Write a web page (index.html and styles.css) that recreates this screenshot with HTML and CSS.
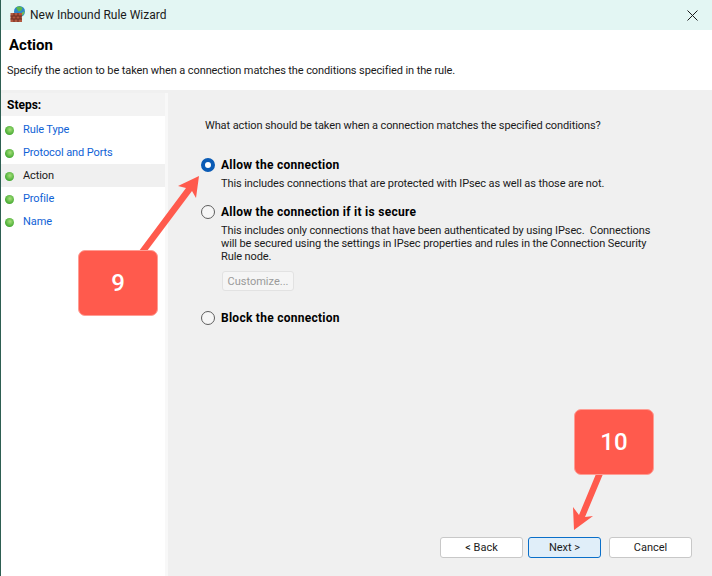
FILE: index.html
```html
<!DOCTYPE html>
<html lang="en">
<head>
<meta charset="utf-8">
<title>New Inbound Rule Wizard</title>
<link rel="stylesheet" href="styles.css">
</head>
<body>
<div class="window">
  <header class="titlebar">
    <svg class="app-icon" width="18" height="18" viewBox="0 0 18 18">
      <circle cx="9.500" cy="5.500" r="5.500" fill="#2f86c9"/>
      <path d="M6 1.500c2-1.500 5-1.500 6.500 0.500l-1 2.500-3 1z" fill="#5fb84a"/>
      <path d="M11.500 7l3-2c0 2-1 4-3 5z" fill="#6fc052"/>
      <rect x="0.500" y="7" width="11.500" height="9" fill="#b2573f"/>
      <path d="M0.500 10h11.500M0.500 13h11.500M4 7v3M8 7v3M2 10v3M6 10v3M10 10v3M4 13v3M8 13v3" stroke="#6d2f22" stroke-width="1" fill="none"/>
    </svg>
    <span class="title">New Inbound Rule Wizard</span>
    <svg class="close" width="11" height="11" viewBox="0 0 11 11">
      <path d="M0.500 0.500l10 10M10.500 0.500l-10 10" stroke="#1a1a1a" stroke-width="1" fill="none"/>
    </svg>
  </header>
  <section class="head">
    <h1>Action</h1>
    <p>Specify the action to be taken when a connection matches the conditions specified in the rule.</p>
  </section>
  <div class="body">
    <nav class="steps">
      <div class="steps-title">Steps:</div>
      <ul>
        <li class="step"><i class="dot"></i>Rule Type</li>
        <li class="step"><i class="dot"></i>Protocol and Ports</li>
        <li class="step current"><i class="dot"></i>Action</li>
        <li class="step"><i class="dot"></i>Profile</li>
        <li class="step"><i class="dot"></i>Name</li>
      </ul>
    </nav>
    <main class="content">
      <p class="question">What action should be taken when a connection matches the specified conditions?</p>
      <div class="option first">
        <div class="radio-row"><i class="radio checked"></i><b>Allow the connection</b></div>
        <p class="desc">This includes connections that are protected with IPsec as well as those are not.</p>
      </div>
      <div class="option second">
        <div class="radio-row"><i class="radio"></i><b>Allow the connection if it is secure</b></div>
        <p class="desc">This includes only connections that have been authenticated by using IPsec.&nbsp; Connections<br>will be secured using the settings in IPsec properties and rules in the Connection Security<br>Rule node.</p>
        <button class="customize" disabled>Customize...</button>
      </div>
      <div class="option third">
        <div class="radio-row"><i class="radio"></i><b>Block the connection</b></div>
      </div>
      <div class="buttons">
        <button class="btn back">&lt; Back</button>
        <button class="btn next">Next &gt;</button>
        <button class="btn cancel">Cancel</button>
      </div>
    </main>
  </div>
</div>
<svg class="arrows" width="712" height="576" viewBox="0 0 712 576">
  <path d="M139 251L186 188L178 186L199 176L196 198L192 191L147 251z" fill="#ff5a4d"/>
  <path d="M596 474L579 515L573 507L574 530L593 516L585 517L603 474z" fill="#ff5a4d"/>
</svg>
<div class="callout nine">9</div>
<div class="callout ten">10</div>
</body>
</html>
```

FILE: styles.css
```css
* { box-sizing: border-box; }
html, body { margin: 0; padding: 0; }
body {
  width: 712px;
  height: 576px;
  overflow: hidden;
  position: relative;
  font-family: Roboto, "Noto Sans", sans-serif;
  font-size: 11px;
  letter-spacing: -0.1px;
  color: #1a1a1a;
  background: #fff;
}
.window {
  width: 712px;
  height: 576px;
  display: flex;
  flex-direction: column;
  border-left: 1px solid #2e5f52;
}
.titlebar {
  height: 30px;
  flex: none;
  display: flex;
  align-items: center;
  padding: 0 14px 0 9px;
  background: #e3f6f3;
}
.app-icon { flex: none; }
.title { margin-left: 2px; font-size: 12px; letter-spacing: 0; flex: 1; }
.head {
  height: 60px;
  flex: none;
  padding: 7px 0 0 6px;
  background: #fff;
}
.head h1 { margin: 0; font-size: 15px; letter-spacing: 0; line-height: 16px; font-weight: 700; color: #000; padding-left: 2px; }
.head p { margin: 10px 0 0; line-height: 16px; }
.body {
  flex: 1;
  display: flex;
  min-height: 0;
  border-top: 3px solid #f0f0f0;
}
.steps { width: 167px; flex: none; background: #fff; border-right: 3px solid #f8f8f8; }
.steps-title {
  height: 23px;
  padding-left: 6px;
  line-height: 24px;
  font-size: 12px;
  letter-spacing: 0;
  font-weight: 700;
  background: #f3f3f3;
  color: #000;
}
.steps ul { list-style: none; margin: 0; padding: 0; margin-top: 2px; }
.step {
  height: 23px;
  line-height: 22px;
  padding: 1px 0 0 4px;
  color: #0f62d6;
  display: flex;
  align-items: center;
}
.step.current { background: #f0f0f0; color: #1a1a1a; }
.dot {
  width: 9px;
  height: 9px;
  border-radius: 50%;
  margin-right: 9px;
  background: radial-gradient(circle at 55% 40%, #a6e07a, #3da52c 75%);
}
.content {
  flex: 1;
  position: relative;
  background: #f0f0f0;
  padding: 25px 0 0 37px;
}
.question { margin: 0; line-height: 16px; }
.option { margin-left: -4px; }
.first { margin-top: 23px; }
.second { margin-top: 14px; }
.third { margin-top: 19px; }
.radio-row { display: flex; align-items: center; height: 16px; font-size: 12px; letter-spacing: 0.27px; color: #000; }
.radio {
  width: 14px;
  height: 14px;
  border-radius: 50%;
  border: 1px solid #5e5e5e;
  background: #f6f6f6;
  margin-right: 6px;
  flex: none;
}
.radio.checked { border: 4px solid #0a5bb5; background: #fff; }
.desc { margin: 4px 0 0 20px; line-height: 13px; }
.customize {
  display: block;
  margin: 8px 0 0 21px;
  width: 72px;
  height: 20px;
  padding: 0;
  font: inherit;
  color: #9a9a9a;
  background: #f5f5f5;
  border: 1px solid #e2e2e2;
  border-radius: 3px;
}
.buttons {
  position: absolute;
  right: 20px;
  bottom: 18px;
  display: flex;
  gap: 8px;
}
.btn {
  height: 21px;
  width: 83px;
  padding: 0;
  font: inherit;
  color: #1a1a1a;
  background: #fff;
  border: 1px solid #c8c8c8;
  border-radius: 3px;
}
.btn.next { width: 73px; margin-left: -3px; background: #e0eef9; border-color: #0a6fc9; }
.arrows { position: absolute; left: 0; top: 0; pointer-events: none; }
.callout {
  position: absolute;
  width: 80px;
  height: 66px;
  display: flex;
  align-items: center;
  justify-content: center;
  border-radius: 7px;
  background: #ff5a4d;
  border: 1px solid #ff9d94;
  color: #fff;
  font-family: Roboto, sans-serif;
  font-weight: 500;
  letter-spacing: 0;
  font-size: 24px;
}
.nine { left: 78px; top: 250px; }
.ten { left: 574px; top: 409px; }
```
